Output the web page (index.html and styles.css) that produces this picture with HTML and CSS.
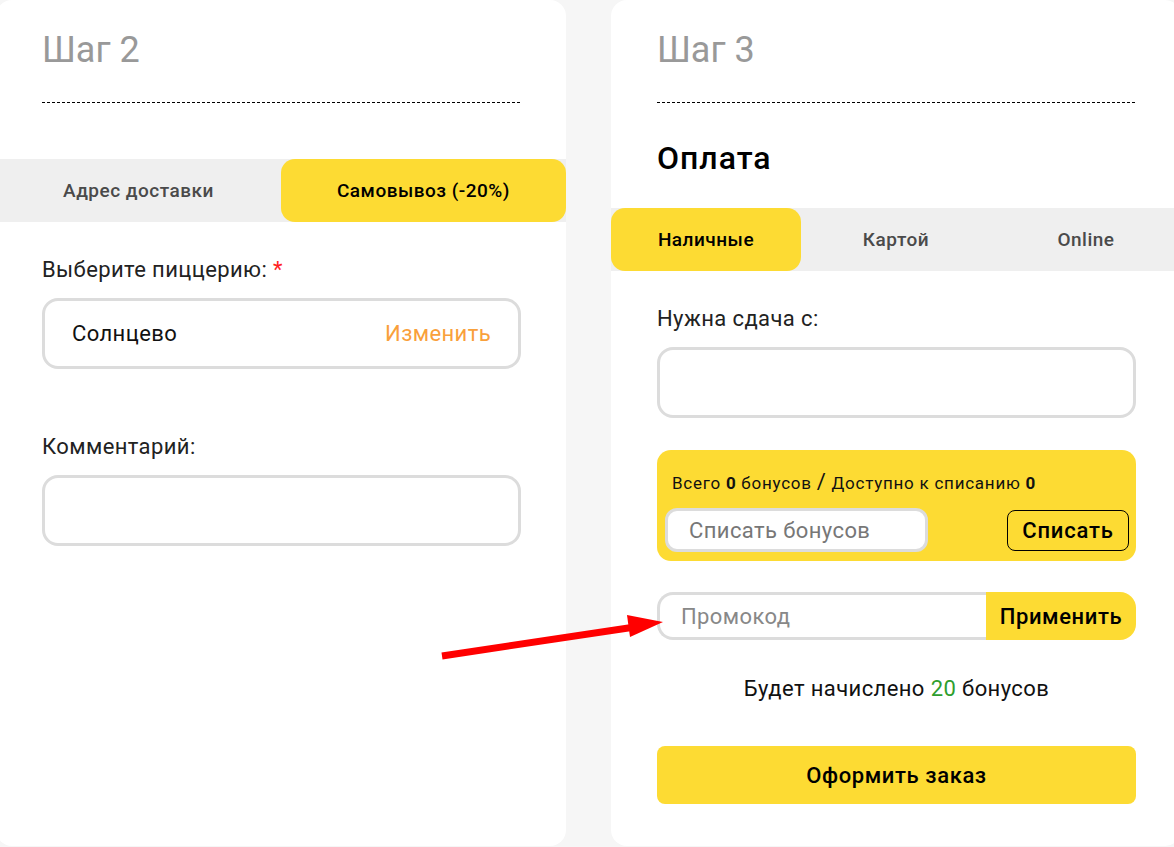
FILE: index.html
```html
<!DOCTYPE html>
<html lang="ru">

<head>
    <meta charset="UTF-8">
    <meta name="viewport" content="width=device-width, initial-scale=1.0">
    <link rel="stylesheet" href="styles.css">
    <title>Оформление заказа</title>
</head>

<body>
    <div class="page">
        <!-- шаг 2: доставка / самовывоз -->
        <section class="card">
            <div class="card-head">
                <h2 class="step">Шаг 2</h2>
                <div class="dash"></div>
            </div>

            <div class="tabs tabs-left">
                <div class="tab">Адрес доставки</div>
                <div class="tab active">Самовывоз (-20%)</div>
            </div>

            <div class="card-body">
                <label class="label first">Выберите пиццерию: <span class="req">*</span></label>
                <div class="field select">
                    <span>Солнцево</span>
                    <span class="change">Изменить</span>
                </div>

                <label class="label comment">Комментарий:</label>
                <div class="field"></div>
            </div>
        </section>

        <!-- шаг 3: оплата -->
        <section class="card">
            <div class="card-head">
                <h2 class="step">Шаг 3</h2>
                <div class="dash"></div>
                <h3 class="title">Оплата</h3>
            </div>

            <div class="tabs tabs-right">
                <div class="tab active">Наличные</div>
                <div class="tab">Картой</div>
                <div class="tab">Online</div>
            </div>

            <div class="card-body">
                <label class="label first">Нужна сдача с:</label>
                <div class="field"></div>

                <div class="bonus">
                    <div class="bonus-text">Всего <b>0</b> бонусов <span class="slash">/</span> Доступно к списанию <b>0</b></div>
                    <div class="bonus-row">
                        <div class="bonus-input">Списать бонусов</div>
                        <button class="bonus-btn">Списать</button>
                    </div>
                </div>

                <div class="promo">
                    <div class="promo-input">Промокод</div>
                    <button class="promo-btn">Применить</button>
                </div>

                <p class="earn">Будет начислено <span class="green">20</span> бонусов</p>

                <button class="order">Оформить заказ</button>
            </div>
        </section>

        <svg class="arrow" width="240" height="60" viewBox="0 0 240 60">
            <line x1="2" y1="56" x2="195" y2="27" stroke="#ff0000" stroke-width="7" />
            <polygon points="187,15 223,22 190,37" fill="#ff0000" />
        </svg>
    </div>
</body>

</html>
```

FILE: styles.css
```css
body {
    margin: 0;
    background-color: #f6f6f6;
    font-family: Roboto, "Liberation Sans", sans-serif;
    color: #111;
    overflow: hidden;
}

.page {
    position: relative;
    display: flex;
    align-items: stretch;
    gap: 45px;
    margin-left: -4px;
    width: 1200px;
    height: 847px;
}

.card {
    width: 570px;
    height: 846px;
    background-color: #fff;
    border-radius: 16px;
    flex-shrink: 0;
}

.card-head {
    padding: 30px 46px 0;
}

.step {
    margin: 0;
    font-size: 36px;
    line-height: 40px;
    font-weight: 400;
    color: #999;
}

.dash {
    margin-top: 32px;
    border-top: 1px dashed #000;
}

.title {
    margin: 37px 0 0;
    font-size: 32px;
    line-height: 36px;
    font-weight: 500;
    letter-spacing: 1px;
    color: #000;
}

.tabs {
    display: flex;
    background-color: #efefef;
    height: 63px;
}

.tabs-left {
    margin-top: 56px;
}

.tabs-right {
    margin-top: 32px;
}

.tab {
    flex: 1;
    display: flex;
    align-items: center;
    justify-content: center;
    font-size: 19px;
    font-weight: 500;
    letter-spacing: 0.5px;
    color: #4a4a4a;
    border-radius: 14px;
}

.tab.active {
    background-color: #fddb33;
    color: #000;
}

.card-body {
    padding: 0 45px 0 46px;
    display: flex;
    flex-direction: column;
}

.label {
    font-size: 22px;
    line-height: 24px;
    letter-spacing: 0.4px;
    color: #222;
}

.label.first {
    margin-top: 36px;
}

.label.comment {
    margin-top: 66px;
}

.req {
    color: #f22;
}

.field {
    margin-top: 16px;
    height: 65px;
    border: 3px solid #dcdcdc;
    border-radius: 16px;
}

.select {
    display: flex;
    align-items: center;
    justify-content: space-between;
    padding: 0 27px;
    font-size: 22px;
    letter-spacing: 0.4px;
    color: #111;
}

.change {
    color: #f9a03b;
}

.bonus {
    margin-top: 32px;
    background-color: #fddb33;
    border-radius: 14px;
    padding: 22px 7px 9px 8px;
}

.bonus-text {
    padding-left: 7px;
    font-size: 17px;
    line-height: 20px;
    letter-spacing: 0.75px;
    color: #111;
}

.bonus-text b {
    font-weight: 700;
}

.slash {
    font-size: 22px;
}

.bonus-row {
    margin-top: 15px;
    display: flex;
    align-items: center;
    justify-content: space-between;
}

.bonus-input {
    width: 236px;
    height: 38px;
    background-color: #fff;
    border: 3px solid #dcdcdc;
    border-radius: 12px;
    padding-left: 21px;
    display: flex;
    align-items: center;
    font-size: 22px;
    letter-spacing: 0.4px;
    color: #777;
}

.bonus-btn {
    height: 41px;
    width: 122px;
    background: transparent;
    border: 1px solid #000;
    border-radius: 8px;
    font-family: inherit;
    font-size: 22px;
    font-weight: 500;
    letter-spacing: 0.8px;
    color: #000;
}

.promo {
    margin-top: 31px;
    display: flex;
    height: 48px;
}

.promo-input {
    flex: 1;
    border: 3px solid #dcdcdc;
    border-right: none;
    border-radius: 16px 0 0 16px;
    display: flex;
    align-items: center;
    padding-left: 21px;
    font-size: 22px;
    letter-spacing: 0.4px;
    color: #888;
}

.promo-btn {
    width: 150px;
    border: none;
    background-color: #fddb33;
    border-radius: 0 16px 16px 0;
    font-family: inherit;
    font-size: 22px;
    font-weight: 500;
    letter-spacing: 0.6px;
    color: #000;
}

.earn {
    margin: 37px 0 0;
    text-align: center;
    font-size: 22px;
    line-height: 24px;
    letter-spacing: 0.4px;
    color: #111;
}

.green {
    color: #2e9e2e;
}

.order {
    margin-top: 45px;
    height: 58px;
    border: none;
    border-radius: 8px;
    background-color: #fddb33;
    font-family: inherit;
    font-size: 22px;
    font-weight: 500;
    letter-spacing: 0.6px;
    color: #000;
}

.arrow {
    position: absolute;
    left: 444px;
    top: 600px;
}
```
